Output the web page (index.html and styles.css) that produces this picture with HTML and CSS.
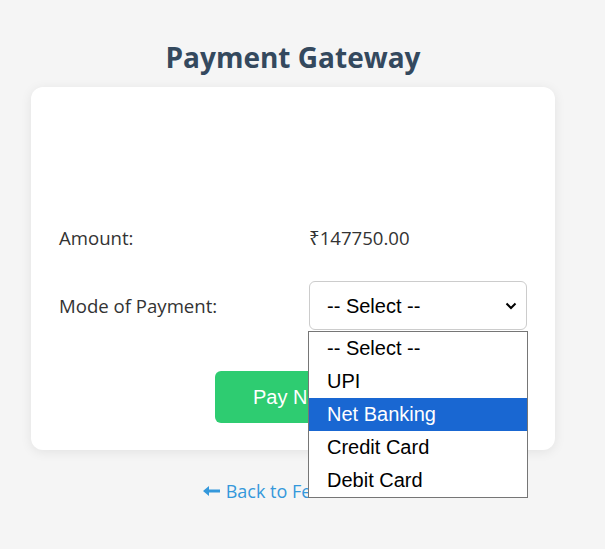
FILE: index.html
```html
<!DOCTYPE html>
<html lang="en">
<head>
<meta charset="utf-8">
<title>Payment Gateway</title>
<link rel="stylesheet" href="styles.css">
</head>
<body>
<main class="page">
  <h1 class="title">Payment Gateway</h1>
  <section class="card">
    <div class="row">
      <span class="label">Amount:</span>
      <span class="value">₹147750.00</span>
    </div>
    <div class="row row-select">
      <span class="label">Mode of Payment:</span>
      <div class="select-wrap">
        <div class="select">
          <span>-- Select --</span>
          <svg class="chev" width="12" height="8" viewBox="0 0 12 8"><path d="M1.5 1.5 L6 6 L10.5 1.5" fill="none" stroke="#000" stroke-width="2"/></svg>
        </div>
        <ul class="options">
          <li class="opt">-- Select --</li>
          <li class="opt">UPI</li>
          <li class="opt opt-active">Net Banking</li>
          <li class="opt">Credit Card</li>
          <li class="opt">Debit Card</li>
        </ul>
      </div>
    </div>
    <div class="actions">
      <button class="pay">Pay Now</button>
    </div>
  </section>
  <a class="back" href="#"><svg class="arrow" width="17" height="10" viewBox="0 0 17 10"><path d="M0 5 L6 0 L6 3.5 L17 3.5 L17 6.5 L6 6.5 L6 10 Z" fill="#3498db"/></svg>Back to Fee Details</a>
</main>
</body>
</html>
```
FILE: styles.css
```css
* { box-sizing: border-box; }
html, body { margin: 0; padding: 0; }
body {
  background: #f5f5f5;
  font-family: "Open Sans", "Noto Sans", sans-serif;
  color: #333;
}
.page {
  width: 586px;
  display: flex;
  flex-direction: column;
  align-items: center;
  padding-top: 37px;
}
.title {
  margin: 0 0 10px;
  font-size: 28px;
  line-height: 40px;
  font-weight: 700;
  color: #34495e;
}
.card {
  width: 524px;
  background: #fff;
  border-radius: 12px;
  box-shadow: 0 2px 12px rgba(0,0,0,0.08);
  padding: 138px 28px 27px;
}
.row {
  display: grid;
  grid-template-columns: 250px 218px;
  align-items: center;
  font-size: 18.6px;
  line-height: 26px;
}
.row-select { margin-top: 30px; }
.label, .value { color: #333; }
.select-wrap { position: relative; }
.select {
  height: 49px;
  border: 1px solid #ccc;
  border-radius: 6px;
  display: flex;
  align-items: center;
  justify-content: space-between;
  padding: 0 9px 0 17px;
  font-family: "Liberation Sans", Arial, sans-serif;
  font-size: 20px;
  color: #000;
}
.chev { display: block; }
.options {
  position: absolute;
  top: 50px;
  left: -1px;
  width: 220px;
  margin: 0;
  padding: 0;
  list-style: none;
  background: #fff;
  border: 1px solid #767676;
  z-index: 5;
}
.opt {
  height: 33px;
  line-height: 33px;
  padding-left: 18px;
  font-family: "Liberation Sans", Arial, sans-serif;
  font-size: 20px;
  color: #000;
}
.opt-active { background: #1967d2; color: #fff; }
.actions {
  display: flex;
  justify-content: center;
  margin-top: 41px;
}
.pay {
  width: 156px;
  height: 52px;
  border: none;
  border-radius: 6px;
  background: #2ecc71;
  color: #fff;
  font-family: "Liberation Sans", Arial, sans-serif;
  font-size: 20px;
}
.back {
  margin-top: 28px;
  display: flex;
  align-items: center;
  gap: 6px;
  font-size: 18px;
  line-height: 26px;
  color: #3498db;
  text-decoration: none;
}
.arrow { display: block; }
```
